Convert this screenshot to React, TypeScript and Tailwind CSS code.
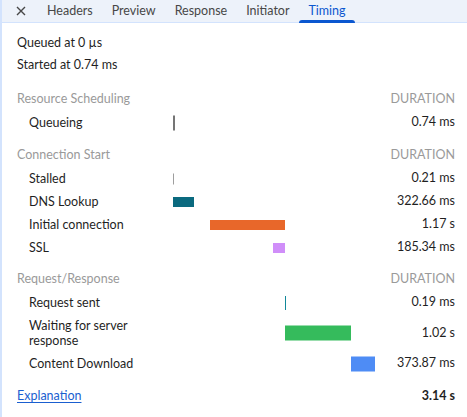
import React from "react";

type Bar = { left: number; width: number; color: string; h: number };
type Row = { label: React.ReactNode; dur: string; bars: Bar[]; tall?: boolean };

const TL = 173; // timeline starting x

function bar(x1: number, x2: number, color: string, h = 10): Bar {
  return { left: x1 - TL, width: x2 - x1, color, h };
}

const sections: { title: string; rows: Row[] }[] = [
  {
    title: "Resource Scheduling",
    rows: [{ label: "Queueing", dur: "0.74 ms", bars: [bar(173, 175, "#757575", 15)] }],
  },
  {
    title: "Connection Start",
    rows: [
      { label: "Stalled", dur: "0.21 ms", bars: [bar(173, 174, "#9e9e9e", 11)] },
      { label: "DNS Lookup", dur: "322.66 ms", bars: [bar(173, 194, "#0b6a7f")] },
      { label: "Initial connection", dur: "1.17 s", bars: [bar(210, 285, "#e8672a")] },
      { label: "SSL", dur: "185.34 ms", bars: [bar(273, 285, "#d08ef9")] },
    ],
  },
  {
    title: "Request/Response",
    rows: [
      { label: "Request sent", dur: "0.19 ms", bars: [bar(285, 286, "#12889a", 14)] },
      {
        label: (
          <>
            Waiting for server
            <br />
            response
          </>
        ),
        dur: "1.02 s",
        bars: [bar(285, 351, "#35bb5c", 15)],
        tall: true,
      },
      { label: "Content Download", dur: "373.87 ms", bars: [bar(351, 375, "#4e8cf5", 15)] },
    ],
  },
];

const sectionMt = ["mt-[12px]", "mt-[10px]", "mt-[9px]"];

export default function App() {
  const tabs = ["Headers", "Preview", "Response", "Initiator", "Timing"];
  return (
    <div
      className="w-[467px] h-[417px] bg-white text-[#1f1f1f] overflow-hidden border-l-2 border-[#d3e3fd]"
      style={{ fontFamily: "Lato, 'Noto Sans', sans-serif" }}
    >
      <div className="h-[23px] bg-[#edf2fa] border-b border-[#d3e3fd] flex items-stretch text-[12.5px] text-[#474747] -ml-[2px]">
        <div className="w-[37.5px] pr-[11.5px] flex items-center justify-end">
          <svg width="10" height="10" viewBox="0 0 10 10">
            <path d="M1 1 L9 9 M9 1 L1 9" stroke="#474747" strokeWidth="1.4" />
          </svg>
        </div>
        {tabs.map((t) => (
          <div
            key={t}
            className={
              "relative px-[9.5px] flex items-center " + (t === "Timing" ? "text-[#0b57d0]" : "")
            }
          >
            {t}
            {t === "Timing" && (
              <div className="absolute left-0 right-0 bottom-[-1px] h-[3px] rounded-t-[3px] bg-[#0b57d0]" />
            )}
          </div>
        ))}
      </div>

      <div className="pl-[15px] pr-[12px] pt-[9px] text-[12.5px]">
        <div className="h-[22px] flex items-center">Queued at 0 µs</div>
        <div className="h-[22px] flex items-center">Started at 0.74 ms</div>

        {sections.map((s, i) => (
          <div key={s.title} className={sectionMt[i]}>
            <div className="h-[23px] flex items-center justify-between text-[#9a9a9a]">
              <span>{s.title}</span>
              <span>DURATION</span>
            </div>
            {s.rows.map((r, j) => (
              <div
                key={j}
                className={"flex items-center " + (r.tall ? "h-[38px]" : "h-[23px]")}
              >
                <div className="w-[156px] pl-[12px] leading-[15px]">{r.label}</div>
                <div className="relative w-[202px] h-full">
                  {r.bars.map((b, k) => (
                    <div
                      key={k}
                      className="absolute top-1/2 -translate-y-1/2"
                      style={{ left: b.left, width: b.width, height: b.h, background: b.color }}
                    />
                  ))}
                </div>
                <div className="flex-1 text-right">{r.dur}</div>
              </div>
            ))}
          </div>
        ))}

        <div className="mt-[10px] h-[23px] flex items-center justify-between">
          <a href="#" className="text-[#1a5fd0] underline underline-offset-2">
            Explanation
          </a>
          <span className="font-bold">3.14 s</span>
        </div>
      </div>
    </div>
  );
}
